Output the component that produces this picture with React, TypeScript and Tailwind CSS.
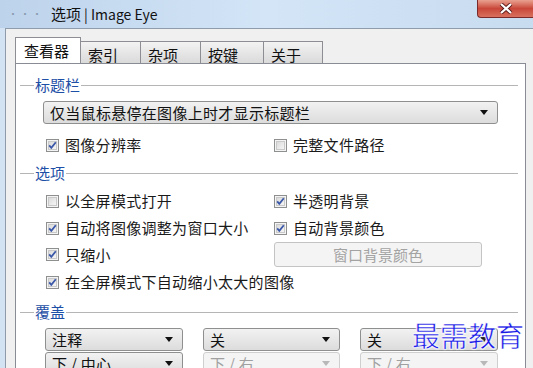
import React from "react";

const FONT = { fontFamily: '"Noto Sans CJK SC", "Noto Sans", sans-serif' };

function CheckBox({ checked }: { checked: boolean }) {
  return (
    <svg width="13" height="13" viewBox="0 0 13 13" className="shrink-0">
      <defs>
        <linearGradient id="cbg" x1="0" y1="0" x2="1" y2="1">
          <stop offset="0" stopColor="#d9d9d9" />
          <stop offset="1" stopColor="#f7f7f7" />
        </linearGradient>
      </defs>
      <rect x="0.5" y="0.5" width="12" height="12" fill="#f4f4f4" stroke="#8e8f8f" />
      <rect x="2.5" y="2.5" width="8" height="8" fill="url(#cbg)" stroke="#c9c9c9" />
      {checked && (
        <path d="M3.2 6.4 L5.3 8.8 L9.8 3.2" fill="none" stroke="#3a57a8" strokeWidth="1.8" />
      )}
    </svg>
  );
}

function Check({ label, checked }: { label: string; checked: boolean }) {
  return (
    <div className="flex items-center h-[20px] gap-[6px]">
      <CheckBox checked={checked} />
      <span className="text-[15px] leading-[20px] text-[#1a1a1a] whitespace-nowrap tracking-[0.3px]">{label}</span>
    </div>
  );
}

function Arrow({ disabled }: { disabled?: boolean }) {
  return (
    <svg width="8" height="5" viewBox="0 0 8 5" className="shrink-0">
      <path d="M0 0 H8 L4 5 Z" fill={disabled ? "#b8b8b8" : "#111"} />
    </svg>
  );
}

function Select({ label, w, disabled }: { label: string; w: string; disabled?: boolean }) {
  return (
    <div
      className={
        "h-[23px] flex items-center justify-between pl-[6px] pr-[9px] rounded-[3px] border " +
        w +
        (disabled
          ? " border-[#cfcfcf] bg-[#f4f4f4] text-[#a0a0a0]"
          : " border-[#8e8f8f] bg-gradient-to-b from-[#f2f2f2] to-[#dcdcdc] text-[#111]")
      }
    >
      <span className="text-[15px] leading-[20px] whitespace-nowrap tracking-[0.3px]">{label}</span>
      <Arrow disabled={disabled} />
    </div>
  );
}

function Header({ label }: { label: string }) {
  return (
    <div className="flex items-center h-[20px]">
      <div className="w-[14px] h-px bg-[#b5b5b5]" />
      <span className="text-[15px] leading-[20px] text-[#1d4fa6] px-[1px]">{label}</span>
      <div className="flex-1 h-px bg-[#b5b5b5]" />
    </div>
  );
}

function Tab({ label, w, active }: { label: string; w: string; active?: boolean }) {
  if (active) {
    return (
      <div
        className={
          "h-[26px] bg-white border-l border-t border-r border-[#8c8e94] pl-[8px] relative z-10 -mb-px " + w
        }
      >
        <span className="text-[15px] leading-[24px] text-[#111]">{label}</span>
      </div>
    );
  }
  return (
    <div
      className={
        "h-[22px] mt-[4px] -ml-px border border-b-0 border-[#8c8e94] bg-gradient-to-b from-[#f3f3f3] to-[#dadada] pl-[7px] " +
        w
      }
    >
      <span className="text-[15px] leading-[22px] text-[#111]">{label}</span>
    </div>
  );
}

export default function App() {
  return (
    <div className="w-[533px] h-[368px] overflow-hidden relative bg-[#f0f0f0]" style={FONT}>
      {/* title bar */}
      <div className="h-[28px] relative bg-gradient-to-r from-[#bdd3eb] via-[#d3e5f7] to-[#c8dcf0] flex items-center">
        <span className="ml-[8px] text-[10px] tracking-[2px] text-[#8a9bb0] leading-none">···</span>
        <span className="ml-[7px] text-[15px] text-[#111] leading-[20px]">选项</span>
        <span className="ml-[3px] text-[14px] text-[#111] leading-[20px]">| Image Eye</span>
        <div className="absolute right-0 top-0 w-[56px] h-[18px] rounded-bl-[4px] border border-t-0 border-r-0 border-[#7a2a2a] bg-gradient-to-b from-[#e8a090] via-[#c9473a] to-[#d8705e] flex items-center justify-center">
          <svg width="14" height="11" viewBox="0 0 14 11">
            <path d="M2 1 L12 10 M12 1 L2 10" stroke="#5a1a1a" strokeWidth="4" />
            <path d="M2 1 L12 10 M12 1 L2 10" stroke="#fff" strokeWidth="2.2" />
          </svg>
        </div>
      </div>
      <div className="flex h-[340px]">
        <div className="w-[5px] bg-[#d3e3f4]" />
        <div className="flex-1 border-l border-t border-[#8f9cab] pl-[9px] pr-[7px] pt-[8px] flex flex-col">
          {/* tabs */}
          <div className="flex items-start h-[26px]">
            <Tab label="查看器" w="w-[66px]" active />
            <Tab label="索引" w="w-[61px]" />
            <Tab label="杂项" w="w-[61px]" />
            <Tab label="按键" w="w-[64px]" />
            <Tab label="关于" w="w-[60px]" />
          </div>
          {/* panel */}
          <div className="flex-1 bg-white border border-[#898c95] pt-[11px] pl-[4px] pr-[7px] flex flex-col">
            <Header label="标题栏" />
            <div className="mt-[6px] ml-[23px]">
              <Select label="仅当鼠标悬停在图像上时才显示标题栏" w="w-[455px]" />
            </div>
            <div className="mt-[11px] ml-[26px] grid grid-cols-[228px_1fr]">
              <Check label="图像分辨率" checked />
              <Check label="完整文件路径" checked={false} />
            </div>
            <div className="mt-[8px]">
              <Header label="选项" />
            </div>
            <div className="mt-[8px] ml-[26px] grid grid-cols-[228px_1fr]">
              <Check label="以全屏模式打开" checked={false} />
              <Check label="半透明背景" checked />
            </div>
            <div className="mt-[7px] ml-[26px] grid grid-cols-[228px_1fr]">
              <Check label="自动将图像调整为窗口大小" checked />
              <Check label="自动背景颜色" checked />
            </div>
            <div className="mt-[4px] ml-[26px] grid grid-cols-[228px_1fr] items-center h-[25px]">
              <Check label="只缩小" checked />
              <div className="w-[208px] h-[25px] rounded-[3px] border border-[#c4c4c4] bg-[#f4f4f4] flex items-center justify-center">
                <span className="text-[15px] leading-[20px] text-[#a3a3a3]">窗口背景颜色</span>
              </div>
            </div>
            <div className="mt-[5px] ml-[26px]">
              <Check label="在全屏模式下自动缩小太大的图像" checked />
            </div>
            <div className="mt-[10px]">
              <Header label="覆盖" />
            </div>
            <div className="mt-[6px] ml-[25px] flex gap-[20px]">
              <Select label="注释" w="w-[138px]" />
              <Select label="关" w="w-[137px]" />
              <Select label="关" w="w-[138px]" />
            </div>
            <div className="mt-[1px] ml-[25px] flex gap-[20px]">
              <Select label="下 / 中心" w="w-[138px]" />
              <Select label="下 / 右" w="w-[137px]" disabled />
              <Select label="下 / 右" w="w-[138px]" disabled />
            </div>
          </div>
        </div>
      </div>
      {/* watermark */}
      <div
        className="absolute left-[412px] top-[318px] text-[28px] leading-[34px] text-[#1a1ae6] tracking-[0px]"
        style={{ WebkitTextStroke: "0.5px #ffffff", textShadow: "0 0 2px #fff, 0 0 2px #fff" }}
      >
        最需教育
      </div>
    </div>
  );
}
